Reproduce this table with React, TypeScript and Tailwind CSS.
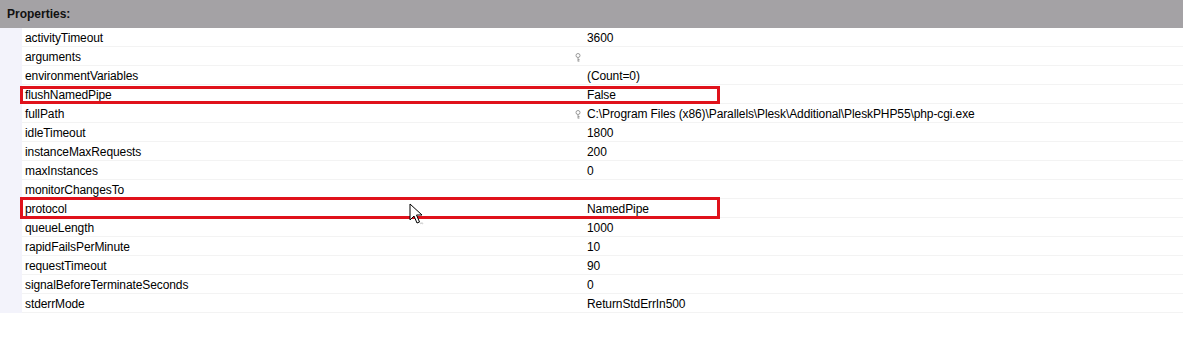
const rows: { name: string; value: string; key?: boolean; mark?: string }[] = [
  { name: 'activityTimeout', value: '3600' },
  { name: 'arguments', value: '', key: true },
  { name: 'environmentVariables', value: '(Count=0)' },
  { name: 'flushNamedPipe', value: 'False', mark: 'top-[1px] h-[18px]' },
  { name: 'fullPath', value: 'C:\\Program Files (x86)\\Parallels\\Plesk\\Additional\\PleskPHP55\\php-cgi.exe', key: true },
  { name: 'idleTimeout', value: '1800' },
  { name: 'instanceMaxRequests', value: '200' },
  { name: 'maxInstances', value: '0' },
  { name: 'monitorChangesTo', value: '' },
  { name: 'protocol', value: 'NamedPipe', mark: 'top-[-2px] h-[22px]' },
  { name: 'queueLength', value: '1000' },
  { name: 'rapidFailsPerMinute', value: '10' },
  { name: 'requestTimeout', value: '90' },
  { name: 'signalBeforeTerminateSeconds', value: '0' },
  { name: 'stderrMode', value: 'ReturnStdErrIn500' },
]

function KeyIcon() {
  return (
    <svg width="6" height="9" viewBox="0 0 6 9" className="absolute left-[553px] top-[6px]">
      <circle cx="3" cy="2.5" r="2" fill="none" stroke="#9a9a9a" strokeWidth="1" />
      <path d="M3 4.5V8.5M3 6.5H4.5M3 8H4.5" stroke="#9a9a9a" strokeWidth="1" />
    </svg>
  )
}

function Cursor() {
  return (
    <svg width="16" height="24" viewBox="0 0 16 24" className="absolute left-[409px] top-[203px]">
      <path d="M1 1V17L5 13L8 20L10.5 19L7.5 12H13Z" fill="white" stroke="black" strokeWidth="1" strokeLinejoin="miter" />
      <path d="M11 20.5L13 20L14 21" stroke="#bbb" strokeWidth="1.5" fill="none" opacity="0.6" />
    </svg>
  )
}

export default function App() {
  return (
    <div className="relative w-[1183px] h-[350px] bg-white overflow-hidden font-['Liberation_Sans',Arial,sans-serif] text-[12px] text-black">
      {/* Header */}
      <div className="h-[28px] bg-[#a4a2a5] flex items-center pl-[7px] font-bold text-[12px] text-[#111]">
        Properties:
      </div>

      <div className="flex">
        <div className="w-[22px] bg-[#f3f3fb]" />
        <div className="flex-1 flex flex-col">
          {rows.map((r) => (
            <div key={r.name} className="relative h-[19px] flex border-b border-[#f3f3f3]">
              <div className="w-[560px] pl-[3px] leading-[20px] tracking-[-0.1px]">{r.name}</div>
              <div className="pl-[5px] leading-[20px] tracking-[-0.1px]">{r.value}</div>
              {r.key && <KeyIcon />}
              {r.mark && (
                <span className={'absolute left-[-2px] w-[700px] border-[3px] border-[#e0121b] ' + r.mark} />
              )}
            </div>
          ))}
        </div>
      </div>

      <Cursor />
    </div>
  )
}
